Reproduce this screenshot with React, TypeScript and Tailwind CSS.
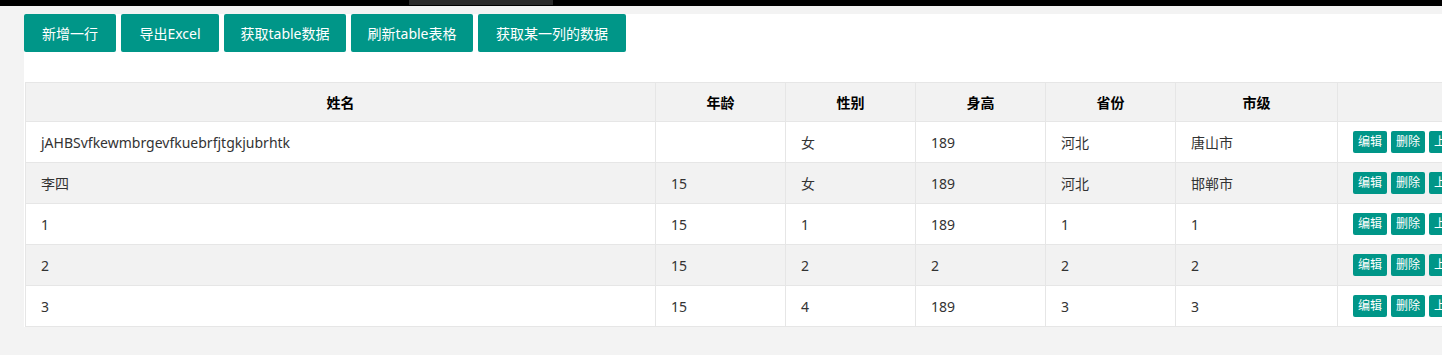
import React from "react";

const font = { fontFamily: '"Noto Sans", "Noto Sans CJK SC", sans-serif' };

const toolbar = [
  { title: "新增一行", w: "w-[92px]" },
  { title: "导出Excel", w: "w-[98px]" },
  { title: "获取table数据", w: "w-[122px]" },
  { title: "刷新table表格", w: "w-[122px]" },
  { title: "获取某一列的数据", w: "w-[148px]" },
];

const columns = [
  { title: "姓名", w: "w-[630px]" },
  { title: "年龄", w: "w-[130px]" },
  { title: "性别", w: "w-[130px]" },
  { title: "身高", w: "w-[130px]" },
  { title: "省份", w: "w-[130px]" },
  { title: "市级", w: "w-[162px]" },
  { title: "", w: "w-[200px]" },
];

const rows = [
  ["jAHBSvfkewmbrgevfkuebrfjtgkjubrhtk", "", "女", "189", "河北", "唐山市"],
  ["李四", "15", "女", "189", "河北", "邯郸市"],
  ["1", "15", "1", "189", "1", "1"],
  ["2", "15", "2", "2", "2", "2"],
  ["3", "15", "4", "189", "3", "3"],
];

const SmallBtn = ({ title }: { title: string }) => (
  <span className="inline-flex h-[22px] shrink-0 items-center rounded-[2px] bg-[#009688] px-[5px] text-[12px] leading-none text-white">
    {title}
  </span>
);

export default function App() {
  return (
    <div className="h-screen overflow-hidden bg-[#f3f3f3]" style={font}>
      {/* top strip */}
      <div className="flex h-[6px] bg-black">
        <div className="ml-[409px] h-[5px] w-[144px] bg-[#2b2b2b]" />
      </div>

      <div className="ml-[24px] mt-[8px] bg-white">
        <div className="flex gap-[5px]">
          {toolbar.map((b) => (
            <button
              key={b.title}
              className={`${b.w} h-[38px] shrink-0 rounded-[2px] bg-[#009688] text-center text-[14px] text-white`}
            >
              {b.title}
            </button>
          ))}
        </div>

        <div className="ml-px mt-[30px] w-[1500px] border-l border-t border-[#e6e6e6] text-[14px]">
          <div className="flex h-[39px] border-b border-[#e6e6e6] bg-[#f2f2f2]">
            {columns.map((c, i) => (
              <div
                key={i}
                className={`${c.w} flex shrink-0 items-center justify-center border-r border-[#e6e6e6] font-bold text-black`}
              >
                {c.title}
              </div>
            ))}
          </div>
          {rows.map((r, ri) => (
            <div
              key={ri}
              className={`flex h-[41px] border-b border-[#e6e6e6] ${
                ri % 2 === 1 ? "bg-[#f2f2f2]" : "bg-white"
              }`}
            >
              {r.map((v, ci) => (
                <div
                  key={ci}
                  className={`${columns[ci].w} flex shrink-0 items-center border-r border-[#e6e6e6] px-[15px] text-[#333]`}
                >
                  {v}
                </div>
              ))}
              <div className="flex w-[200px] shrink-0 items-center gap-[4px] px-[15px]">
                <SmallBtn title="编辑" />
                <SmallBtn title="删除" />
                <SmallBtn title="上移" />
              </div>
            </div>
          ))}
        </div>
      </div>
    </div>
  );
}
